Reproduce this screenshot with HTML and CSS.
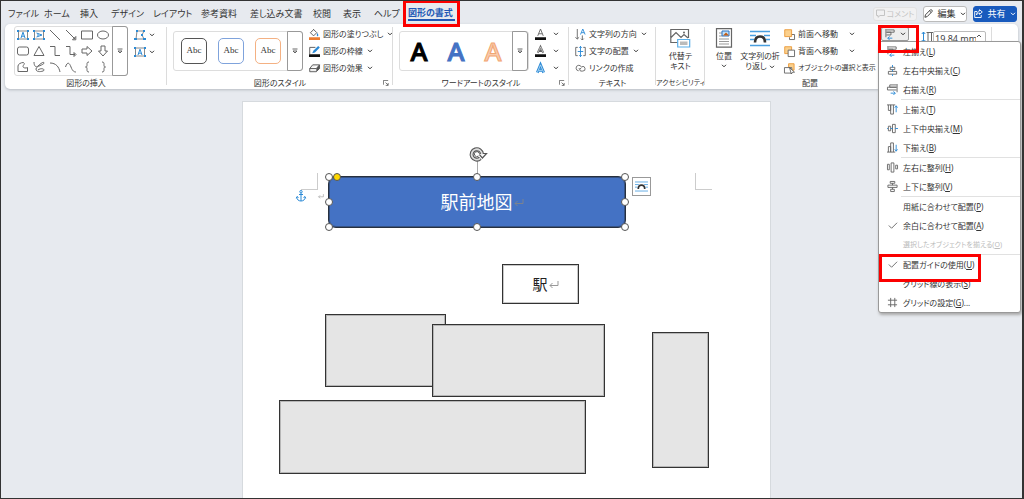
FILE: index.html
```html
<!DOCTYPE html>
<html lang="ja">
<head>
<meta charset="utf-8">
<title>図形の書式</title>
<link rel="stylesheet" href="styles.css">
</head>
<body>
<svg class="defs" aria-hidden="true">
  <symbol id="chev" viewBox="0 0 6 4"><path d="M1 .8 3 2.8 5 .8" fill="none" stroke="currentColor" stroke-width="1"/></symbol>
  <symbol id="more" viewBox="0 0 6 6"><path d="M.5 1h5M1 3 3 5 5 3z" fill="none" stroke="#555" stroke-width=".9"/></symbol>
  <symbol id="launch" viewBox="0 0 7 7"><path d="M.5 5.500V.5H6M3 3l3 3M6 3.500V6.300H3.200" fill="none" stroke="#555" stroke-width=".9"/></symbol>
  <symbol id="wrap" viewBox="0 0 20 17"><path d="M0 1.500h20M0 5.500h6M14 5.500h6M0 9.500h4M16 9.500h4M0 15.500h20" stroke="#4a9fe0" stroke-width="1.300"/><path d="M5 12.500c0-3.500 1.500-6 5-6s5 2.500 5 6" fill="none" stroke="#333" stroke-width="2.600"/></symbol>
  <symbol id="alignl" viewBox="0 0 12 12"><path d="M1 0v9M1.500 1h8.500v2.500H1.500M1.500 3.500h5V6.500h-5" fill="none" stroke="#666"/><path d="M8 10H3M5 8 3 10l2 2" fill="none" stroke="#2b8ad6"/></symbol>
</svg>
<div class="app">
  <header class="top">
    <nav class="tabs">
      <button>ファイル</button><button>ホーム</button><button>挿入</button><button>デザイン</button><button>レイアウト</button><button>参考資料</button><button>差し込み文書</button><button>校閲</button><button>表示</button><button>ヘルプ</button><button class="active">図形の書式</button>
    </nav>
    <div class="actions">
      <button class="comment" disabled><svg viewBox="0 0 9 9"><path d="M.5 1h8v5.500H4L2 8.300V6.500H.5z" fill="none" stroke="#c4c4c4"/></svg>コメント</button>
      <button class="edit"><svg viewBox="0 0 10 10"><path d="M1 9.200 1.600 6.500 7 1c1.200-.8 2.700.6 1.900 1.900L3.500 8.500zM6 2l1.900 1.900" fill="none" stroke="#333"/></svg>編集<svg class="chev"><use href="#chev"/></svg></button>
      <button class="share"><svg viewBox="0 0 9 9"><path d="M3 2.500H.7v6h6.500V6M5.500.7 8.300 3 5.500 5.300V4C4 4 3 4.700 2.500 6 2.500 3.500 4 2.200 5.500 2z" fill="none" stroke="#fff" stroke-width=".9"/></svg>共有<svg class="chev"><use href="#chev"/></svg></button>
    </div>
  </header>

  <section class="ribbon">
    <div class="group">
      <div class="body g-insert">
        <div class="gallery shapes">
          <div class="shape-grid">
            <svg viewBox="0 0 12 12"><path d="M1.500 2h9v8h-9z" fill="none" stroke="#888"/><path d="M4 9 6 3.200 8 9M4.700 7.200h2.600" fill="none" stroke="#2b8ad6"/><path d="M0 1h2v2H0zM10 1h2v2h-2zM0 9h2v2H0zM10 9h2v2h-2z" fill="#2b8ad6" stroke="none"/></svg>
            <svg viewBox="0 0 12 12"><path d="M1.500 2h9v8h-9z" fill="none" stroke="#888"/><path d="M3.500 4 9 6 3.500 8M5 4.700v2.600" fill="none" stroke="#2b8ad6"/><path d="M0 1h2v2H0zM10 1h2v2h-2zM0 9h2v2H0zM10 9h2v2h-2z" fill="#2b8ad6" stroke="none"/></svg>
            <svg viewBox="0 0 12 12"><path d="M1 1l10 10"/></svg>
            <svg viewBox="0 0 12 12"><path d="M1 1l9 9M10.800 7.500v3.300H7.500z"/></svg>
            <svg viewBox="0 0 12 12"><path d="M.5 2h11v8H.5z"/></svg>
            <svg viewBox="0 0 12 12"><ellipse cx="6" cy="6" rx="5.500" ry="4"/></svg>
            <svg viewBox="0 0 12 12"><rect x=".5" y="2" width="11" height="8" rx="2"/></svg>
            <svg viewBox="0 0 12 12"><path d="M6 1.500 11 10.500H1z"/></svg>
            <svg viewBox="0 0 12 12"><path d="M1 1.500h5v9h5"/></svg>
            <svg viewBox="0 0 12 12"><path d="M1 1.500h4v8h5M9 7.500l2 2-2 2z"/></svg>
            <svg viewBox="0 0 12 12"><path d="M1 4h5V1.500L11 6l-5 4.500V8H1z"/></svg>
            <svg viewBox="0 0 12 12"><path d="M4 1v5H1.500L6 11l4.500-5H8V1z"/></svg>
            <svg viewBox="0 0 12 12"><path d="M6.500 1.500C4 1.500 1 3 1 5v5.500h9.500V6.500C9 7.500 6 7 6 5.500S8.500 3 6.500 1.500z"/></svg>
            <svg viewBox="0 0 12 12"><path d="M1 1c0 4 2 6 4 4s6-5 6-3-8 3-8 6 4 3 7 2-1-4-5-1"/></svg>
            <svg viewBox="0 0 12 12"><path d="M1 2c6 0 9 4 10 9"/></svg>
            <svg viewBox="0 0 12 12"><path d="M.5 6c2-6 4-4 5.500 0s3 5 5 5"/></svg>
            <svg viewBox="0 0 12 12"><path d="M8 1C6 1 6 2 6 3.500S6 6 4.500 6C6 6 6 7 6 8.500S6 11 8 11"/></svg>
            <svg viewBox="0 0 12 12"><path d="M5 1c2 0 2 1 2 2.500S7 6 8.500 6C7 6 7 7 7 8.500S7 11 5 11"/></svg>
          </div>
          <button class="more" aria-label="その他の図形"><svg><use href="#more"/></svg></button>
        </div>
        <div class="col">
          <button class="cmd"><svg viewBox="0 0 12 12"><path d="M3 2h7L8 6l2 4H2z" fill="none" stroke="#888"/><path d="M2 1h2v2H2zM9 1h2v2H9zM7 5h2v2H7zM0 9h3v2H0zM9 9h3v2H9z" fill="#2b8ad6"/></svg><svg class="chev"><use href="#chev"/></svg></button>
          <button class="cmd"><svg viewBox="0 0 12 12"><path d="M1.500 2h9v8h-9z" fill="none" stroke="#888"/><path d="M4 9 6 3.200 8 9M4.700 7.200h2.600" fill="none" stroke="#2b8ad6"/><path d="M0 1h2v2H0zM10 1h2v2h-2zM0 9h2v2H0zM10 9h2v2h-2z" fill="#2b8ad6"/></svg><svg class="chev"><use href="#chev"/></svg></button>
        </div>
      </div>
      <div class="label">図形の挿入</div>
    </div>

    <div class="group">
      <div class="body">
        <div class="gallery">
          <button class="abc">Abc</button><button class="abc blue">Abc</button><button class="abc orange">Abc</button>
          <button class="more" aria-label="その他のスタイル"><svg><use href="#more"/></svg></button>
        </div>
        <div class="col">
          <button class="cmd"><svg viewBox="0 0 12 12"><path d="M5 .8 1.500 4 5 7.500 8.500 4 4.500 0" fill="none" stroke="#555"/><path d="M8.800 4q2 2 1.200 3.500-1 .8-1.500-.5z" fill="#2b8ad6"/><path d="M0 9h12v3H0z" fill="#ed7d31"/></svg>図形の塗りつぶし<svg class="chev"><use href="#chev"/></svg></button>
          <button class="cmd"><svg viewBox="0 0 12 12"><path d="M7 1.500H.8V9" fill="none" stroke="#555"/><path d="M3.500 8 5 5l5-5 1.800 1.500L6.500 7z" fill="#2b8ad6"/><path d="M0 9h12v3H0z" fill="#111"/></svg>図形の枠線<svg class="chev"><use href="#chev"/></svg></button>
          <button class="cmd"><svg viewBox="0 0 12 12"><path d="M4 2h7.500v4L8 9.500H.8V6zM.8 6H8l3.500-4" fill="#eee" stroke="#555"/><path d="M8 6v3.500L11.500 6V2z" fill="#555"/></svg>図形の効果<svg class="chev"><use href="#chev"/></svg></button>
        </div>
      </div>
      <div class="label">図形のスタイル<svg class="launch"><use href="#launch"/></svg></div>
    </div>

    <div class="group">
      <div class="body">
        <div class="gallery art">
          <button class="wa">A</button><button class="wa blue">A</button><button class="wa orange">A</button>
          <button class="more" aria-label="その他のワードアート"><svg><use href="#more"/></svg></button>
        </div>
        <div class="col">
          <button class="cmd fill"><svg viewBox="0 0 12 12"><path d="M3 7.500 6 0l3 7.500M4 5.200h4" fill="none" stroke="#666"/><path d="M0 9h12v3H0z" fill="#111"/></svg><svg class="chev"><use href="#chev"/></svg></button>
          <button class="cmd fill"><svg viewBox="0 0 12 12"><path d="M3 7.500 6 1l3 6.500M4 5.500h4" fill="none" stroke="#666" stroke-width="2.200"/><path d="M3 7.500 6 1l3 6.500" fill="none" stroke="#fff" stroke-width=".6"/><path d="M0 9h12v3H0z" fill="#111"/></svg><svg class="chev"><use href="#chev"/></svg></button>
          <button class="cmd fill"><svg viewBox="0 0 12 12"><path d="M2.500 10.500 6 2l3.500 8.500M4 8h4" fill="none" stroke="#2b8ad6" stroke-width="3"/><path d="M2.500 10.500 6 2l3.500 8.500M4 8h4" fill="none" stroke="#c5e2f7" stroke-width=".9"/></svg><svg class="chev"><use href="#chev"/></svg></button>
        </div>
      </div>
      <div class="label">ワードアートのスタイル<svg class="launch"><use href="#launch"/></svg></div>
    </div>

    <div class="group">
      <div class="body">
        <div class="col">
          <button class="cmd"><svg viewBox="0 0 12 12"><path d="M2.500 0v11M.5 9l2 2 2-2M8 12V7M6.500 10.500l1.500 1.500 1.500-1.500" fill="none" stroke="#666"/><path d="M6 6 8.500 0 11 6M7 4h3" fill="none" stroke="#2b8ad6"/></svg>文字列の方向<svg class="chev"><use href="#chev"/></svg></button>
          <button class="cmd"><svg viewBox="0 0 12 12"><path d="M3 1.500H.8v9H3M9 1.500h2.200v9H9" fill="none" stroke="#666"/><path d="M6 0v12M4.500 2 6 .5 7.500 2M4.500 10 6 11.500 7.500 10M3 6h6" fill="none" stroke="#2b8ad6"/></svg>文字の配置<svg class="chev"><use href="#chev"/></svg></button>
          <button class="cmd"><svg viewBox="0 0 12 12"><path d="M4 8.500a3 3 0 1 1 3-4M7 5c-1 2-3 1.500-3 1M6 8.800h2.500a2.500 2.500 0 1 0-1-4.800M6 8.800a2 2 0 0 1 0-3" fill="none" stroke="#666"/></svg>リンクの作成</button>
        </div>
      </div>
      <div class="label">テキスト</div>
    </div>

    <div class="group">
      <div class="body center">
        <button class="big"><svg viewBox="0 0 20 20"><path d="M8 14.500H.8V1.500H18.500V10M1 9.500l5-5 5 5 3-3 4 3.500" fill="none" stroke="#666" stroke-width="1.200"/><circle cx="14" cy="4.500" r="1" fill="#666"/><path d="M7.700 11.500h12v7.500h-12z" fill="#fff" stroke="#5aaee8" stroke-width="1.200"/><path d="M10 13.500h7.500V17H10z" fill="#bbb"/></svg><span>代替テ<br>キスト</span></button>
      </div>
      <div class="label small">アクセシビリティ</div>
    </div>

    <div class="group">
      <div class="body g-arrange">
        <button class="big"><svg viewBox="0 0 20 20"><path d="M2.500.7h15v18.500h-15z" fill="#fff" stroke="#666" stroke-width="1.200"/><path d="M5 5h3M5 8h3M5 11h10M5 13.500h10M5 16h10" stroke="#999"/><path d="M8 3h7v5H8z" fill="#bfe0f8" stroke="#2b70c0"/><path d="M9 7.500l3-3 3 3z" fill="#c55a11"/></svg><span>位置</span><svg class="chev"><use href="#chev"/></svg></button>
        <button class="big wide"><svg viewBox="0 -2 20 20"><use href="#wrap" width="20" height="17"/></svg><span>文字列の折<br>り返し <svg class="chev"><use href="#chev"/></svg></span></button>
        <div class="col">
          <button class="cmd spread"><svg viewBox="0 0 12 12"><path d="M7 6h4.500v5.500H6V9" fill="#fff" stroke="#666"/><path d="M.8.8h7.500v7.500H.8z" fill="#fbd08d" stroke="#eb9a3a"/></svg>前面へ移動<svg class="chev"><use href="#chev"/></svg></button>
          <button class="cmd spread"><svg viewBox="0 0 12 12"><path d="M.8.8h7.500v7.500H.8z" fill="#fbd08d" stroke="#eb9a3a"/><path d="M4.500 4.500h7v7h-7z" fill="#fff" stroke="#666"/></svg>背面へ移動<svg class="chev"><use href="#chev"/></svg></button>
          <button class="cmd small"><svg viewBox="0 0 12 12"><path d="M5 .8h6v7H5z" fill="#fbd08d" stroke="#eb9a3a"/><path d="M.5 5h8v6h-8z" fill="#fff" stroke="#666"/><path d="M6 5l5.500 5-2.300.2L8 12z" fill="#fff" stroke="#444" stroke-width=".8"/></svg>オブジェクトの選択と表示</button>
        </div>
        <div class="align">
          <button class="align-btn" aria-label="配置"><svg viewBox="0 0 12 12"><use href="#alignl"/></svg><svg class="chev"><use href="#chev"/></svg></button>
          <div class="menu">
            <button><svg viewBox="0 0 12 12"><use href="#alignl"/></svg><span>左揃え(<u>L</u>)</span></button>
            <button><svg viewBox="0 0 12 12"><path d="M3.500 2.500h5v2.500h-5zM1.500 7h9v3h-9z"/><path class="b" d="M6 0v2.500M6 5v2M6 10v2"/></svg><span>左右中央揃え(<u>C</u>)</span></button>
            <button><svg viewBox="0 0 12 12"><path d="M11 0v9M10.500 1H3v2.500h7.500M10.500 3.500H.5v3h10"/><path class="b" d="M4 10h5M7 8l2 2-2 2"/></svg><span>右揃え(<u>R</u>)</span></button>
            <button class="sep"><svg viewBox="0 0 12 12"><path d="M0 1h9M1.500 1v6H4V1M4 1v10h3V1"/><path class="b" d="M10 9V2M8.500 4 10 2l1.500 2"/></svg><span>上揃え(<u>T</u>)</span></button>
            <button><svg viewBox="0 0 12 12"><path d="M1.500 3.500H4v5H1.500zM6 1.500h3v9H6z"/><path class="b" d="M0 6h1M4 6h2M9 6h3"/></svg><span>上下中央揃え(<u>M</u>)</span></button>
            <button><svg viewBox="0 0 12 12"><path d="M0 11h9M1.500 11V5H4v6M4 11V1h3v10"/><path class="b" d="M10 3v7M8.500 8l1.500 2 1.500-2"/></svg><span>下揃え(<u>B</u>)</span></button>
            <button class="sep"><svg viewBox="0 0 12 12"><path d="M.5 2.500h2v6h-2zM4.500 1h3v10h-3zM9.500 3.500h2v4h-2z"/></svg><span>左右に整列(<u>H</u>)</span></button>
            <button><svg viewBox="0 0 12 12"><path d="M3.500.5h5v2h-5zM1 4.500h10v2.500H1zM4 9h4v2.500H4zM6 2.500v2M6 7v2"/></svg><span>上下に整列(<u>V</u>)</span></button>
            <button class="sep"><svg viewBox="0 0 12 12"></svg><span>用紙に合わせて配置(<u>P</u>)</span></button>
            <button><svg viewBox="0 0 12 12"><path d="M2 6l3 3 6-6"/></svg><span>余白に合わせて配置(<u>A</u>)</span></button>
            <button class="small" disabled><svg viewBox="0 0 12 12"></svg><span>選択したオブジェクトを揃える(<u>O</u>)</span></button>
            <button class="sep marked"><svg viewBox="0 0 12 12"><path d="M2 6l3 3 6-6"/></svg><span>配置ガイドの使用(<u>U</u>)</span></button>
            <button><svg viewBox="0 0 12 12"></svg><span>グリッド線の表示(<u>S</u>)</span></button>
            <button><svg viewBox="0 0 12 12"><path d="M4 1v10M8.500 1v10M1 3.500h10M1 8.500h10"/></svg><span>グリッドの設定(<u>G</u>)...</span></button>
          </div>
        </div>
      </div>
      <div class="label">配置</div>
    </div>

    <div class="group">
      <div class="body g-size">
        <label for="height" aria-label="図形の高さ"><svg viewBox="0 0 12 12"><path d="M2.500 1v10M.8 3l1.700-2 1.700 2M.8 9l1.700 2 1.700-2" fill="none" stroke="#2b8ad6"/><path d="M5.500 1.500H12M7 2v10M10.500 2v10" fill="none" stroke="#666"/></svg></label>
        <div class="spin"><input id="height" value="19.84 mm"><svg viewBox="0 0 6 4"><path d="M1 3 3 1l2 2" fill="none" stroke="#555"/></svg></div>
      </div>
    </div>
    <div class="group"></div>
  </section>

  <main class="canvas">
    <div class="page">
      <i class="corner left"></i><i class="corner right"></i>
      <svg class="anchor" viewBox="0 0 10 12"><g fill="none" stroke="#2b8ad6"><circle cx="5" cy="1.700" r="1.200"/><path d="M5 3v8M3 4.500h4M.8 7c0 2.500 1.700 4 4.200 4s4.200-1.500 4.200-4M.3 8.300 1 6.500l1.500 1M9.700 8.300 9 6.500l-1.500 1"/></g></svg>
      <svg class="ret para" viewBox="0 0 10 8"><path d="M9 0v4.500H1M3.500 2 1 4.500 3.500 7" fill="none" stroke="#999"/></svg>
      <div class="banner">駅前地図<svg class="ret" viewBox="0 0 10 8"><path d="M9 0v4.500H1M3.500 2 1 4.500 3.500 7" fill="none" stroke="#7b828f"/></svg>
        <i class="stem"></i>
        <svg class="rotate" viewBox="0 0 18 16"><path d="M11.300 12.300A5.200 5.200 0 1 1 13 8" fill="none" stroke="#555" stroke-width="4"/><path d="M9.500 7.500h8L13.400 12z" fill="#fff" stroke="#555" stroke-width="1.200"/><path d="M11.300 12.300A5.200 5.200 0 1 1 13 8.500" fill="none" stroke="#ddd" stroke-width="1.800"/><circle cx="8" cy="8" r="2.500" fill="#fff"/><path d="M9.500 10A2.500 2.500 0 1 1 10.300 7.500" fill="none" stroke="#555"/></svg>
        <i class="h tl"></i><i class="h tc"></i><i class="h tr"></i><i class="h ml"></i><i class="h mr"></i><i class="h bl"></i><i class="h bc"></i><i class="h br"></i><i class="h adjust"></i>
      </div>
      <button class="options" aria-label="レイアウト オプション"><svg viewBox="0 0 20 17"><use href="#wrap"/></svg></button>
      <div class="box station">駅<svg class="ret" viewBox="0 0 10 8"><path d="M9 0v4.500H1M3.500 2 1 4.500 3.500 7" fill="none" stroke="#999"/></svg></div>
      <div class="box b1"></div><div class="box b2"></div><div class="box b3"></div><div class="box b4"></div>
    </div>
  </main>
</div>
</body>
</html>
```
FILE: styles.css
```css
*, *::before, *::after { box-sizing: border-box; }
body {
  margin: 0;
  font-family: "Noto Sans", "Noto Sans CJK JP", sans-serif;
  font-size: 8px;
  line-height: 10px;
  font-feature-settings: "palt";
  color: #333;
}
button {
  font: inherit;
  font-feature-settings: inherit;
  color: inherit;
  background: none;
  border: 0;
  padding: 0;
  margin: 0;
  white-space: nowrap;
}
svg { display: block; flex: none; overflow: visible; }
.defs { position: absolute; width: 0; height: 0; }
.chev { width: 6px; height: 4px; }

.app {
  height: 100vh;
  display: flex;
  flex-direction: column;
  overflow: hidden;
  background: #e7eaef;
  border: 1px solid #333;
  border-right-width: 2px;
}

/* Tab row */
.top {
  display: flex;
  justify-content: space-between;
  align-items: center;
  height: 23px;
  padding: 2px 5px 0 7px;
  font-size: 9px;
}
.tabs {
  display: grid;
  grid-template-columns: 36px 36px 31px 42px 48px 49px 63px 30px 31px 34px 47px;
  line-height: 14px;
}
.tabs button { text-align: left; }
.tabs .active {
  position: relative;
  color: #2158b5;
  font-weight: 700;
  border-bottom: 2px solid #2158b5;
  line-height: 13px;
}
.tabs .active::after, .align::after, .marked::after {
  content: "";
  position: absolute;
  border: 3px solid #fb0000;
  pointer-events: none;
  z-index: 5;
}
.tabs .active::after { inset: -6px -5px -8px; }
.actions { display: flex; align-items: center; gap: 6px; }
.actions button {
  display: flex;
  align-items: center;
  justify-content: center;
  gap: 4px;
  width: 44px;
  height: 16px;
  border: 1px solid #bbb;
  border-radius: 3px;
  background: #fff;
}
.actions svg:first-child { width: 9px; height: 9px; }
.actions .comment { color: #c4c4c4; background: #f1f1f2; border-color: #e2e2e2; height: 14px; font-size: 8px; gap: 2px; }
.actions .share { color: #fff; background: #185abd; border-color: #185abd; }

/* Ribbon */
.ribbon {
  display: grid;
  grid-template-columns: 162fr 226fr 176fr 87fr 49fr 210fr 77fr 26fr;
  margin: 0 4px;
  height: 65px;
  background: #fff;
  border-radius: 5px;
  box-shadow: 0 1px 3px #b5bac2;
  position: relative;
  z-index: 2;
}
.group { display: flex; flex-direction: column; min-width: 0; position: relative; }
.group:not(:last-child)::after {
  content: "";
  position: absolute;
  right: 0;
  top: 3px;
  bottom: 4px;
  border-right: 1px solid #dcdcdc;
}
.group:nth-child(6)::after { display: none; }
.body { display: flex; height: 54px; padding-left: 6px; gap: 6px; align-items: center; }
.body.center { justify-content: center; padding: 0; }
.label { text-align: center; position: relative; white-space: nowrap; }
.small { font-size: 7px; }
.launch { position: absolute; right: 4px; top: 2px; width: 6px; height: 6px; }
.gallery {
  display: flex;
  align-items: center;
  height: 40px;
  width: 130px;
  border: 1px solid #ddd;
  border-radius: 3px;
  gap: 11px;
  padding-left: 7px;
}
.gallery .more {
  width: 16px;
  align-self: stretch;
  margin: -1px -1px -1px auto;
  border: 1px solid #999;
  border-radius: 0 3px 3px 0;
  display: grid;
  place-content: center;
  flex: none;
}
.abc + .more, .wa + .more { margin-left: -5px; }
.more svg { width: 6px; height: 6px; }
.g-insert { padding-left: 9px; }
.shapes { width: 114px; height: 50px; padding-left: 2px; gap: 0; }
.shape-grid {
  display: grid;
  grid-template-columns: repeat(6, 12px);
  gap: 4px;
}
.shape-grid svg { width: 12px; height: 12px; fill: none; stroke: #666; stroke-width: 1px; }
.abc {
  flex: none;
  width: 26px;
  height: 26px;
  border: 1px solid #555;
  border-radius: 5px;
  font: 9px/20px "Liberation Serif", serif;
  padding-bottom: 2px;
}
.abc.blue { border-color: #7fa3dc; }
.abc.orange { border-color: #f4b183; }
.wa { flex: none; width: 26px; font: 500 26px/30px "Noto Sans", sans-serif; color: #000; -webkit-text-stroke: 1px #000; }
.gallery.art { padding-left: 6px; }
.wa.blue { color: #4472c4; -webkit-text-stroke-color: #4472c4; }
.wa.orange { color: #f8cbad; -webkit-text-stroke-color: #f2a673; }
.col { display: grid; grid-auto-rows: 17px; align-content: center; justify-items: start; }
.g-insert .col { align-self: start; padding-top: 2px; }
.cmd { display: flex; align-items: center; gap: 4px; }
.cmd > svg:first-child { width: 11px; height: 11px; margin-right: -1px; }
.g-insert .cmd > svg:first-child { width: 12px; height: 12px; }
.fill { gap: 8px; }
.spread { gap: 4px; width: 71px; }
.spread .chev { margin-left: auto; }
.big { display: flex; flex-direction: column; align-items: center; height: 46px; }
.big > svg:first-child { width: 20px; height: 20px; margin-bottom: 3px; }
.big span { display: block; }
.big span .chev { display: inline-block; vertical-align: middle; }
.big > .chev { margin-top: 3px; }
.g-arrange { padding-left: 9px; gap: 6px; }
.g-arrange .col { margin-left: -2px; }
.g-arrange .big { width: 20px; }
.g-arrange .big.wide { width: 40px; }
.align { position: absolute; right: 6px; top: 3px; }
.align::after { left: -3px; top: -2px; width: 41px; height: 28px; }
.align-btn {
  display: flex;
  align-items: center;
  justify-content: center;
  gap: 4px;
  width: 28px;
  height: 14px;
  background: #eee;
  border: 1px solid #999;
  border-radius: 2px;
}
.align-btn svg:first-child { width: 11px; height: 11px; }
.menu {
  position: absolute;
  left: -3px;
  top: 14px;
  width: 143px;
  background: #fff;
  border: 1px solid #999;
  border-radius: 3px;
  box-shadow: 1px 2px 3px #aaa;
  z-index: 3;
}
.menu button {
  display: grid;
  grid-template-columns: 12px 1fr;
  gap: 4px;
  align-items: center;
  text-align: left;
  width: 100%;
  height: 19px;
  padding-left: 8px;
  position: relative;
}
.menu svg { width: 11px; height: 11px; fill: none; stroke: #666; }
.menu .b { stroke: #2b8ad6; }
.menu u { text-underline-offset: 1px; }
.menu button:disabled { color: #bbb; }
.menu .sep { height: 20px; padding-top: 1px; }
.menu .sep::before {
  content: "";
  position: absolute;
  left: 22px;
  right: 0;
  top: 0;
  border-top: 1px solid #e1e1e1;
}
.marked::after { left: 0; top: 0; width: 102px; height: 28px; }
.g-size { align-items: flex-start; gap: 0; padding: 7px 6px 0 6px; }
.g-size label svg { width: 12px; height: 12px; }
.spin {
  display: flex;
  flex: 1;
  min-width: 0;
  height: 15px;
  border: 1px solid #bbb;
  border-radius: 2px;
}
.spin input {
  width: 42px;
  border: 0;
  padding: 0 0 0 1px;
  background: none;
  color: #444;
  font: 9px/13px "Noto Sans", sans-serif;
}
.spin svg { width: 6px; height: 4px; margin-top: 2px; }

/* Document */
.canvas { flex: 1; padding: 12px 11px 0 0; min-height: 0; }
.page {
  position: relative;
  width: 529px;
  height: 100%;
  margin: 0 auto;
  background: #fff;
  border: 1px solid #d6dade;
  border-bottom: 0;
}
.page > * { position: absolute; }
.corner { width: 17px; height: 17px; border: 0 solid #ccc; top: 71px; }
.corner.left { left: 58px; border-width: 0 1px 1px 0; }
.corner.right { left: 452px; border-width: 0 0 1px 1px; }
.anchor { left: 53px; top: 88px; width: 10px; height: 12px; }
.ret { width: 10px; height: 8px; margin: 2px -11px 0 1px; }
.para { left: 74px; top: 90px; width: 6px; height: 5px; }
.banner {
  left: 85px;
  top: 74px;
  width: 298px;
  height: 52px;
  display: flex;
  align-items: center;
  justify-content: center;
  background: #4472c4;
  border: 1px solid #27303f;
  outline: 1px solid #27303f77;
  outline-offset: -2px;
  border-radius: 8px;
  color: #fff;
  font-size: 18px;
  line-height: 24px;
}
.banner i, .rotate { position: absolute; }
.stem { left: 50%; top: -16px; height: 14px; border-left: 1px solid #aaa; }
.rotate { left: 140px; top: -31px; width: 18px; height: 16px; }
.h {
  width: 8px;
  height: 8px;
  margin: -4px;
  background: #fff;
  border: 1px solid #555;
  border-radius: 50%;
}
.tl, .tc, .tr { top: 0; }
.ml, .mr { top: 50%; }
.bl, .bc, .br { top: 100%; }
.tl, .ml, .bl { left: 0; }
.tc, .bc { left: 50%; }
.tr, .mr, .br { left: 100%; }
.adjust { left: 8px; top: 0; background: #ffd800; }
.options {
  left: 389px;
  top: 75px;
  width: 19px;
  height: 19px;
  border: 1px solid #999;
  background: #fff;
  display: grid;
  place-content: center;
}
.options svg { width: 13px; height: 11px; }
.box { border: 1px solid #333; outline: 1px solid #3334; outline-offset: -2px; background: #e5e5e5; }
.station {
  left: 259px;
  top: 162px;
  width: 77px;
  height: 40px;
  display: flex;
  align-items: center;
  justify-content: center;
  background: #fff;
  color: #222;
  font-size: 15px;
  line-height: 20px;
}
.b1 { left: 82px; top: 212px; width: 121px; height: 73px; }
.b2 { left: 189px; top: 222px; width: 173px; height: 73px; }
.b3 { left: 36px; top: 298px; width: 307px; height: 74px; }
.b4 { left: 409px; top: 230px; width: 57px; height: 136px; }
```
